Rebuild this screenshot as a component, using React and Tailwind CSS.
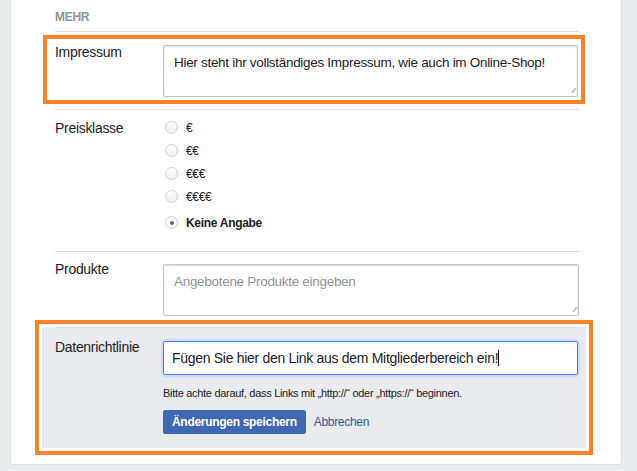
export default function App() {
  const radios = ["€", "€€", "€€€", "€€€€"];
  return (
    <div className="w-[637px] h-[471px] bg-[#e9ebee] overflow-hidden tracking-[-0.3px]" style={{ fontFamily: '"Liberation Sans", Arial, sans-serif' }}>
      <div className="ml-[10px] w-[612px] h-[465px] bg-white rounded-b-[3px] border border-t-0 border-[#dddfe2] pl-[44px] pr-[42px]">
        <div className="pt-[8px] h-[32px] text-[12px] font-bold text-[#90949c] border-b border-[#dddfe2]">MEHR</div>
        <div className="ml-[-12px] mr-[-6px] mt-[3px] border-4 border-[#fd8227] flex pl-[8px] pr-[3px] pt-[6px] pb-[3px] h-[69px]">
          <div className="w-[108px] text-[14px] text-[#1d2129] mt-[-3px]">Impressum</div>
          <div className="flex-1 h-[52px] border border-[#bec3c9] rounded-[2px] shadow-[inset_0_1px_2px_rgba(0,0,0,0.15)] pl-[10px] pt-[7px] text-[13.5px] text-[#1d2129] relative whitespace-nowrap">
            Hier steht ihr vollständiges Impressum, wie auch im Online-Shop!
            <span className="absolute right-[2px] bottom-[1px] text-[8px] text-[#888] leading-none">⁄⁄</span>
          </div>
        </div>
        <div className="mt-[5px] border-t border-[#dddfe2] flex pt-[8px] h-[142px]">
          <div className="w-[108px] text-[14px] text-[#1d2129]">Preisklasse</div>
          <div className="flex flex-col gap-[8px] pt-[2px] ml-[2px]">
            {radios.map((r) => (
              <div key={r} className="flex items-center gap-[8px] h-[15px] text-[12px] text-[#1d2129]">
                <span className="w-[13px] h-[13px] rounded-full border border-[#ccd0d5] bg-gradient-to-b from-white to-[#eee]" />
                {r}
              </div>
            ))}
            <div className="flex items-center gap-[8px] h-[15px] mt-[3px] text-[12px] font-bold text-[#1d2129]">
              <span className="w-[13px] h-[13px] rounded-full border border-[#ccd0d5] bg-white flex items-center justify-center">
                <span className="w-[4px] h-[4px] rounded-full bg-[#606770]" />
              </span>
              Keine Angabe
            </div>
          </div>
        </div>
        <div className="border-t border-[#dddfe2] flex pt-[10px] h-[69px]">
          <div className="w-[108px] text-[14px] text-[#1d2129] mt-[-3px]">Produkte</div>
          <div className="flex-1 h-[52px] mt-[2px] border border-[#bec3c9] rounded-[2px] shadow-[inset_0_1px_2px_rgba(0,0,0,0.15)] px-[10px] pt-[7px] text-[13.5px] text-[#90949c] relative">
            Angebotene Produkte eingeben
            <span className="absolute right-[2px] bottom-[1px] text-[8px] text-[#888] leading-none">⁄⁄</span>
          </div>
        </div>
        <div className="ml-[-20px] mr-[-14px] border-4 border-[#fd8227] p-[3px] h-[135px]">
          <div className="bg-[#e9ebee] h-full pl-[13px] pr-[8px]">
            <div className="border-t border-[#dddfe2] flex pt-[12px]">
              <div className="w-[108px] text-[14px] text-[#1d2129] mt-[-3px]">Datenrichtlinie</div>
              <div className="flex-1">
                <div className="h-[34px] mt-[1px] bg-white border border-[#4080ff] rounded-[2px] shadow-[0_0_0_2px_rgba(64,128,255,0.15)] px-[8px] flex items-center text-[14px] text-[#1d2129]">
                  Fügen Sie hier den Link aus dem Mitgliederbereich ein!<span className="w-[1px] h-[16px] bg-black" />
                </div>
                <div className="mt-[10px] text-[11px] text-[#1d2129]">Bitte achte darauf, dass Links mit „http://“ oder „https://“ beginnen.</div>
                <div className="mt-[8px] flex items-center gap-[8px]">
                  <div className="h-[24px] px-[8px] bg-[#4267b2] border border-[#4267b2] rounded-[2px] text-white text-[12px] font-bold flex items-center">Änderungen speichern</div>
                  <div className="text-[12px] text-[#365899]">Abbrechen</div>
                </div>
              </div>
            </div>
          </div>
        </div>
      </div>
    </div>
  );
}
